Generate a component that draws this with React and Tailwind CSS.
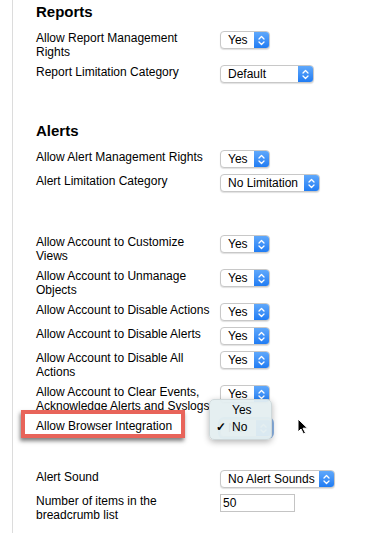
import React from 'react';

const Select = ({ value, width, focused }) => (
    <div
        className={`flex h-[18px] rounded-[4px] bg-white border border-[#c8c8c8] shadow-[0_1px_1px_rgba(0,0,0,0.12)] overflow-hidden ${focused ? 'ring-2 ring-[#8fb7e8]' : ''}`}
        style={{ width }}
    >
        <div className="flex-1 pl-[7px] text-[12px] leading-[16px] text-black whitespace-nowrap">{value}</div>
        <div className="w-[15px] bg-gradient-to-b from-[#5fa8fb] to-[#1f7cf3] flex items-center justify-center">
            <svg width="7" height="11" viewBox="0 0 7 11" fill="none" stroke="white" strokeWidth="1.3" strokeLinecap="round" strokeLinejoin="round">
                <path d="M1 4 L3.5 1.5 L6 4" />
                <path d="M1 7 L3.5 9.5 L6 7" />
            </svg>
        </div>
    </div>
);

const Row = ({ label, children }) => (
    <div className="flex items-start mb-[6px]">
        <div className="w-[184px] shrink-0 text-[12px] leading-[14px] text-black">{label}</div>
        <div>{children}</div>
    </div>
);

const App = () => {
    return (
        <div className="w-[367px] h-[533px] bg-white overflow-hidden font-['Liberation_Sans',Arial,sans-serif]">
            <div className="ml-[12px] h-full border-l border-[#dcdcdc] pl-[23px] pt-[3px]">
                {/* Reports */}
                <h2 className="text-[15px] leading-[18px] font-bold text-black mb-[10px]">Reports</h2>
                <Row label={<>Allow Report Management<br />Rights</>}>
                    <Select value="Yes" width={50} />
                </Row>
                <Row label="Report Limitation Category">
                    <Select value="Default" width={94} />
                </Row>

                {/* Alerts */}
                <h2 className="text-[15px] leading-[18px] font-bold text-black mt-[39px] mb-[10px]">Alerts</h2>
                <Row label="Allow Alert Management Rights">
                    <Select value="Yes" width={50} />
                </Row>
                <Row label="Alert Limitation Category">
                    <Select value="No Limitation" width={100} />
                </Row>

                <div className="h-[37px]" />

                <Row label={<>Allow Account to Customize<br />Views</>}>
                    <Select value="Yes" width={50} />
                </Row>
                <Row label={<>Allow Account to Unmanage<br />Objects</>}>
                    <Select value="Yes" width={50} />
                </Row>
                <Row label="Allow Account to Disable Actions">
                    <Select value="Yes" width={50} />
                </Row>
                <Row label="Allow Account to Disable Alerts">
                    <Select value="Yes" width={50} />
                </Row>
                <Row label={<>Allow Account to Disable All<br />Actions</>}>
                    <Select value="Yes" width={50} />
                </Row>
                <Row label={<>Allow Account to Clear Events,<br /><span className="whitespace-nowrap">Acknowledge Alerts and Syslogs</span></>}>
                    <Select value="Yes" width={50} />
                </Row>

                {/* highlighted row with open menu */}
                <div className="relative flex items-start mb-[6px]">
                    <div className="w-[184px] shrink-0 text-[12px] leading-[14px] text-black">Allow Browser Integration</div>
                    <Select value="No" width={52} focused />
                    <div className="absolute left-[-15px] top-[-9px] w-[164px] h-[28px] border-[4px] border-[#e8645a] shadow-[-1px_3px_4px_rgba(0,0,0,0.5)]" />
                    <div className="absolute left-[173px] top-[-20px] w-[63px] h-[41px] rounded-[5px] bg-[#e4eef0]/95 border border-[#cfd8da] shadow-[0_2px_6px_rgba(0,0,0,0.3)] text-[12px] leading-[16px] text-black py-[2px]">
                        <div className="pl-[22px]">Yes</div>
                        <div className="relative pl-[22px] mt-px">
                            <span className="absolute left-[6px] top-0 font-bold">✓</span>No
                        </div>
                    </div>
                    <svg className="absolute left-[261px] top-[-1px]" width="12" height="17" viewBox="0 0 12 17">
                        <path d="M1 1 L1 14 L4 11 L6.5 16 L8.5 15 L6 10.2 L10.5 10.2 Z" fill="black" stroke="white" strokeWidth="1" />
                    </svg>
                </div>

                <div className="h-[27px]" />

                <Row label="Alert Sound">
                    <Select value="No Alert Sounds" width={115} />
                </Row>
                <Row label={<>Number of items in the<br />breadcrumb list</>}>
                    <div className="w-[75px] h-[18px] border border-[#c4c4c4] text-[12px] leading-[16px] pl-[2px] text-black">50</div>
                </Row>
            </div>
        </div>
    );
};

export default App;
